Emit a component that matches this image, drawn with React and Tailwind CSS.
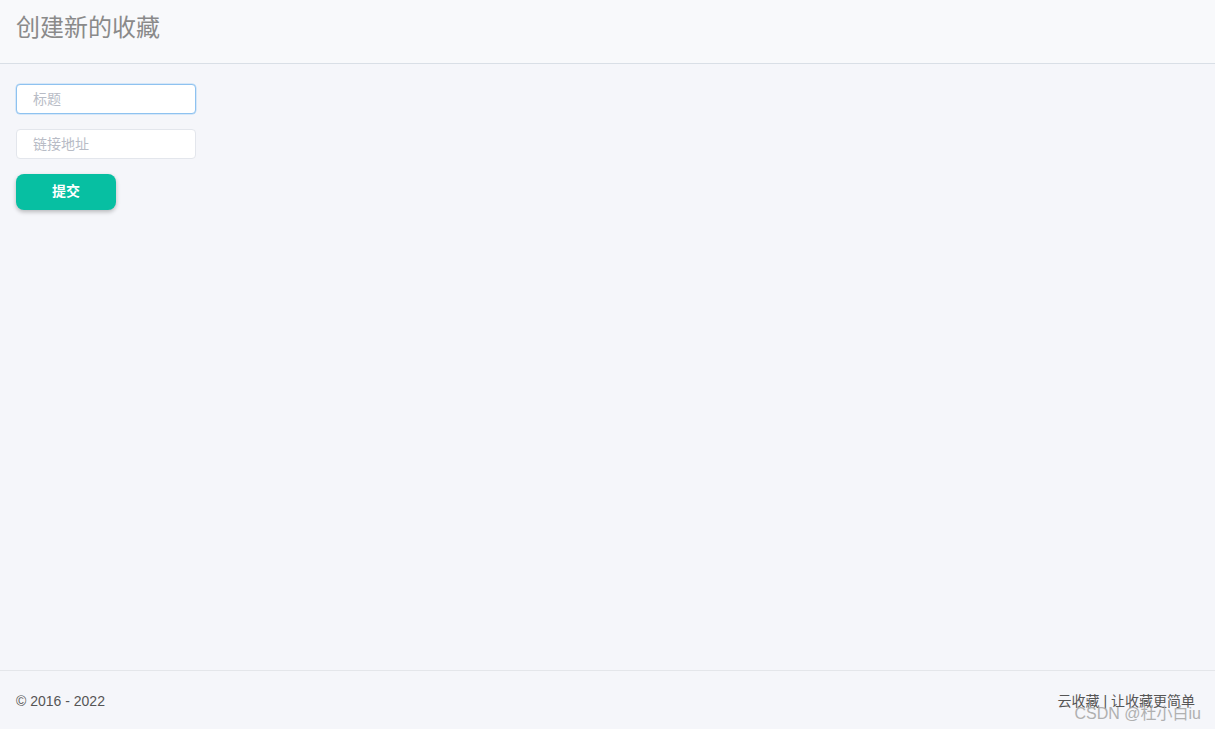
export default function App() {
  const font = { fontFamily: '"Helvetica Neue", "Liberation Sans", "Noto Sans CJK SC", sans-serif' };
  return (
    <div className="relative flex flex-col h-[729px] bg-[#f5f6fa]" style={font}>
      <header className="h-[64px] shrink-0 bg-[#f8f9fb] border-b border-[#d9dfe6] flex items-center px-4">
        <h1 className="text-[24px] leading-none text-[#8a8a8a] font-normal -mt-[8px]">创建新的收藏</h1>
      </header>
      <main className="flex-1 px-4 pt-[20px] flex flex-col">
        <input
          autoFocus
          placeholder="标题"
          className="w-[180px] h-[30px] rounded-[4px] bg-white border border-[#8ec2f0] shadow-[0_0_0_0.5px_#b8d8f5] px-4 text-[14px] text-[#555] placeholder:text-[#b8bcc6] outline-none caret-[#333]"
        />
        <input
          placeholder="链接地址"
          className="mt-[15px] w-[180px] h-[30px] rounded-[4px] bg-white border border-[#e3e6ec] px-4 text-[14px] text-[#555] placeholder:text-[#b8bcc6] outline-none"
        />
        <button className="mt-[15px] w-[100px] h-[36px] rounded-[8px] bg-[#07bfa2] text-white text-[14px] font-semibold shadow-[0_2px_4px_rgba(0,0,0,0.25)] flex items-center justify-center pb-[2px]">
          提交
        </button>
      </main>
      <footer className="h-[59px] shrink-0 border-t border-[#e4e6ea] flex items-center justify-between pl-4 pr-[20px] text-[14px] text-[#555]">
        <span className="pt-[2px]">© 2016 - 2022</span>
        <span className="pt-[2px] text-[#555]">云收藏 | 让收藏更简单</span>
      </footer>
      <div className="absolute right-[14px] bottom-[7px] text-[16px] leading-none text-[#a9a9a9] opacity-90">CSDN @杜小白iu</div>
    </div>
  );
}
